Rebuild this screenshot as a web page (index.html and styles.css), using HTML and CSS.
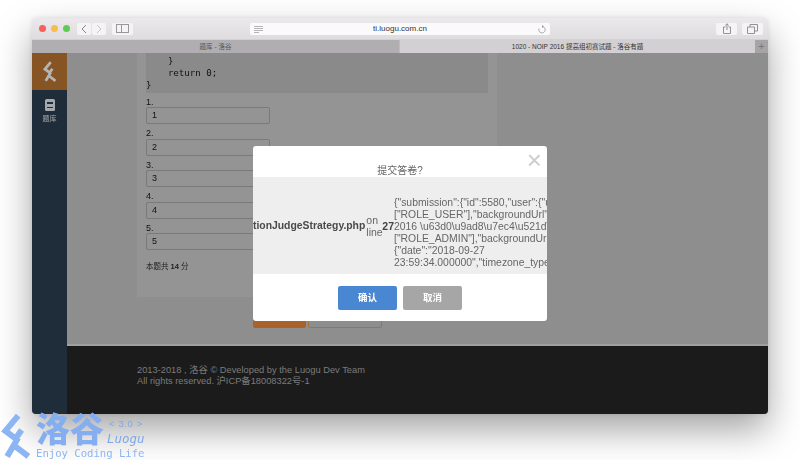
FILE: index.html
```html
<!DOCTYPE html>
<html lang="zh">
<head>
<meta charset="utf-8">
<title>Luogu</title>
<link rel="stylesheet" href="styles.css">
</head>
<body>
<svg class="defs" width="0" height="0"><symbol id="lg" viewBox="0 0 36 54"><path d="M20 3 L5 21 L17 30 L24 20 M20 29 L7 51 M15 38 L32 51" fill="none" stroke="currentColor" stroke-width="7"/></symbol></svg>
<div class="window">
  <div class="toolbar">
    <div class="lights"><i class="red"></i><i class="yellow"></i><i class="green"></i></div>
    <div class="navgroup">
      <div class="tbtn nav"><svg width="8" height="12" viewBox="0 0 8 12"><path d="M6 2 L2 6 L6 10" fill="none" stroke="#888" stroke-width="1"/></svg></div>
      <div class="tbtn nav"><svg width="8" height="12" viewBox="0 0 8 12"><path d="M2 2 L6 6 L2 10" fill="none" stroke="#c4c4c4" stroke-width="1"/></svg></div>
    </div>
    <div class="tbtn side"><svg width="13" height="9" viewBox="0 0 13 9"><rect x=".5" y=".5" width="12" height="8" fill="none" stroke="#999"/><path d="M5.5 0 V9" stroke="#999"/></svg></div>
    <div class="address">
      <svg class="reader" width="9" height="7" viewBox="0 0 9 7"><path d="M0 .5 H9 M0 2.5 H9 M0 4.5 H9 M0 6.5 H5" stroke="#b5b5b5"/></svg>
      <span class="url">ti.luogu.com.cn</span>
      <svg class="reload" width="8" height="9" viewBox="0 0 8 9"><path d="M4 1.5 A3.2 3.2 0 1 1 1 3.5 M4 .2 L5.5 1.5 L4 2.8" fill="none" stroke="#999" stroke-width=".8"/></svg>
    </div>
    <div class="tbtn act"><svg width="8" height="11" viewBox="0 0 8 11"><path d="M2.5 4 H.5 V10.5 H7.5 V4 H5.5 M4 7 V.8 M2.3 2.4 L4 .8 L5.7 2.4" fill="none" stroke="#888" stroke-width=".9"/></svg></div>
    <div class="tbtn act"><svg width="11" height="10" viewBox="0 0 11 10"><path d="M.5 3 H7.5 V9.5 H.5 Z M3 3 V.5 H10.5 V7 H7.5" fill="none" stroke="#888" stroke-width=".9"/></svg></div>
  </div>
  <div class="tabs">
    <div class="tab dim">题库 - 洛谷</div>
    <div class="tab on">1020 - NOIP 2016 提高组初赛试题 - 洛谷有题</div>
    <div class="plus">+</div>
  </div>
  <div class="page">
    <nav class="sidebar">
      <div class="brand"><svg width="14" height="21"><use href="#lg"/></svg></div>
      <div class="navitem">
        <svg width="10" height="12" viewBox="0 0 10 12"><path d="M1.5 0 H8.5 Q10 0 10 1.5 V10.5 Q10 12 8.5 12 H1.5 Q0 12 0 10.5 V1.5 Q0 0 1.5 0 Z M2 3 V5 H8 V3 Z M2 8 V9 H8 V8 Z" fill="#a5a9ad" fill-rule="evenodd"/></svg>
        <span>题库</span>
      </div>
    </nav>
    <div class="content">
      <main class="main">
        <div class="card">
          <pre class="code">    }
    return 0;
}</pre>
          <div class="q">1.</div><div class="field">1</div>
          <div class="q">2.</div><div class="field">2</div>
          <div class="q">3.</div><div class="field">3</div>
          <div class="q">4.</div><div class="field">4</div>
          <div class="q">5.</div><div class="field">5</div>
          <p class="score">本题共 <b>14</b> 分</p>
        </div>
        <div class="actions"><span class="b1"></span><span class="b2"></span></div>
      </main>
      <footer class="footer">2013-2018 , 洛谷 © Developed by the Luogu Dev Team<br>All rights reserved. 沪ICP备18008322号-1</footer>
    </div>
    <div class="modal">
      <span class="close">×</span>
      <div class="mtitle">提交答卷?</div>
      <div class="mbody">
        <b class="file">tionJudgeStrategy.php</b>
        <span class="online">on<br>line</span>
        <b class="num">27</b>
        <div class="dump">{"submission":{"id":5580,"user":{"uid":1,"roles":<br>["ROLE_USER"],"backgroundUrl":"","name":"<br>2016 \u63d0\u9ad8\u7ec4\u521d\u8d5b\u8bd5\u9898<br>["ROLE_ADMIN"],"backgroundUrl":"","user":<br>{"date":"2018-09-27<br>23:59:34.000000","timezone_type":3,"timezone"</div>
      </div>
      <div class="mfoot"><span class="btn ok">确认</span><span class="btn no">取消</span></div>
    </div>
  </div>
</div>
<div class="stamp">
  <svg class="stamp-icon" width="31" height="46"><use href="#lg"/></svg>
  <span class="stamp-cn">洛谷</span>
  <div class="stamp-side"><span>&lt; 3.0 &gt;</span><em>Luogu</em></div>
  <span class="stamp-en">Enjoy Coding Life</span>
</div>
</body>
</html>
```
FILE: styles.css
```css
html,body{margin:0;padding:0;background:#fff;height:460px;overflow:hidden}
body{position:relative;font-family:"Liberation Sans","Noto Sans CJK SC",sans-serif}
.defs{position:absolute}
.window{margin:18px 32px 0;height:396px;border-radius:4px;overflow:hidden;display:flex;flex-direction:column;box-shadow:0 16px 36px rgba(0,0,0,.36),0 0 5px rgba(0,0,0,.1);filter:blur(.35px)}
.toolbar{height:21px;flex:none;background:linear-gradient(#ebe9eb,#dedcde);display:flex;align-items:center;padding:0 5px 0 7px;border-bottom:1px solid #d3d1d3}
.lights{display:flex;gap:5px;margin-right:7px}
.lights i{width:7px;height:7px;border-radius:50%;display:block}
.red{background:#f4615a}.yellow{background:#f5bd4f}.green{background:#5fcb55}
.navgroup{display:flex;gap:1px;margin-right:6px}
.tbtn{height:12px;background:#f5f4f5;border-radius:2px;display:flex;align-items:center;justify-content:center}
.nav{width:14px}
.side{width:21px}
.address{position:relative;width:300px;height:12px;margin:0 auto 0 117px;background:#fbfafb;border-radius:2px;display:flex;align-items:center;justify-content:center}
.url{font-size:8px;color:#333}
.reader{position:absolute;left:4px;top:3px}
.reload{position:absolute;right:4px;top:2px}
.act{width:21px;margin-left:5px}
.tabs{height:13px;flex:none;display:flex;font-size:6.5px;line-height:13px;text-align:center;background:#cfcdcf}
.tab{color:#333}
.dim{width:367px;background:#b0aeb0;color:#555;border-right:1px solid #bdbbbd}
.on{flex:1;background:#d2d0d2}
.plus{width:13px;background:#a6a4a6;color:#777;font-size:11px}
.page{flex:1;position:relative;display:flex;min-height:0;background:#8e8e8e}
.sidebar{width:35px;flex:none;background:#1f2c39;display:flex;flex-direction:column}
.brand{height:37px;background:#875424;display:flex;align-items:center;justify-content:center;color:#b5b5b5}
.navitem{display:flex;flex-direction:column;align-items:center;gap:2px;padding-top:9px;font-size:7px;color:#a5a9ad}
.content{flex:1;display:flex;flex-direction:column;min-width:0}
.main{height:293px;flex:none;padding-left:70px;overflow:hidden;border-bottom:2px solid #a0a0a0;box-sizing:border-box}
.card{width:342px;height:244px;padding:0 9px;background:#949494;font-size:9px;color:#111;overflow:hidden}
.code{margin:0;height:39.5px;background:#8a8a8a;font:9.1px/12px "DejaVu Sans Mono",monospace;color:#111;padding-top:2px;box-sizing:border-box}
.q{height:10.5px;line-height:11px;margin-top:4px}
.field{width:117px;height:15px;border:1px solid #7a7a7a;border-radius:2px;line-height:15px;padding-left:5px;font-size:9px}
.score{font-size:7.5px;margin:10px 0 0;color:#222}
.actions{display:flex;gap:2px;margin:19px 0 0 116px}
.b1{width:53px;height:12px;background:#a8622a;border-radius:2px}
.b2{width:72px;height:10px;border:1px solid #a8703c;border-radius:2px}
.footer{flex:1;background:#1b1b1b;color:#7b7b7b;font-size:9.3px;line-height:10.5px;padding:19px 0 0 70px}
.modal{position:absolute;left:221px;top:93px;width:294px;height:175px;background:#fff;border-radius:3px;overflow:hidden;display:flex;flex-direction:column}
.close{position:absolute;right:5px;top:2px;font-size:26px;line-height:24px;color:#cdcdcd}
.mtitle{height:31px;flex:none;box-sizing:border-box;padding-top:18px;text-align:center;font-size:10px;line-height:13px;color:#666}
.mbody{height:97px;flex:none;box-sizing:border-box;padding-top:1px;background:#eee;display:flex;align-items:center;justify-content:flex-end;color:#666;font-size:10px;line-height:12px;overflow:hidden}
.file{flex:none;color:#4a4a4a;font-size:10.4px}
.online{flex:none;width:16px;padding-left:1px;line-height:12px;font-size:10.5px}
.num{flex:none;color:#444;font-size:10.5px}
.dump{flex:none;width:153px;white-space:nowrap;overflow:hidden;font-size:10.4px;margin-top:13px}
.mfoot{flex:1;display:flex;justify-content:center;align-items:flex-start;gap:6px;padding-top:12px}
.btn{width:59px;height:24px;border-radius:2px;color:#fff;font-size:9.5px;font-weight:700;line-height:24px;text-align:center}
.ok{background:#4a87d2}
.no{background:#a6a6a6}
.stamp{position:absolute;left:1px;top:413px;width:150px;height:46px;color:#8cb5f3;filter:blur(.35px)}
.stamp-icon{position:absolute;left:0;top:0}
.stamp-cn{position:absolute;left:35px;top:-1px;font-size:34px;line-height:36px;font-weight:900;color:#84aef0}
.stamp-side{position:absolute;left:107px;top:5px;display:flex;flex-direction:column;font-size:9.5px;line-height:12px;color:#7fa8e8;white-space:nowrap}
.stamp-side span{padding-left:1px;letter-spacing:.6px}
.stamp-side em{font-family:"DejaVu Sans Mono",monospace;font-size:12.5px;line-height:15px;margin:1px 0 0 -1px}
.stamp-en{position:absolute;left:35px;top:33px;font:10.6px/14px "DejaVu Sans Mono",monospace;color:#8cb5f3;white-space:nowrap}
```
